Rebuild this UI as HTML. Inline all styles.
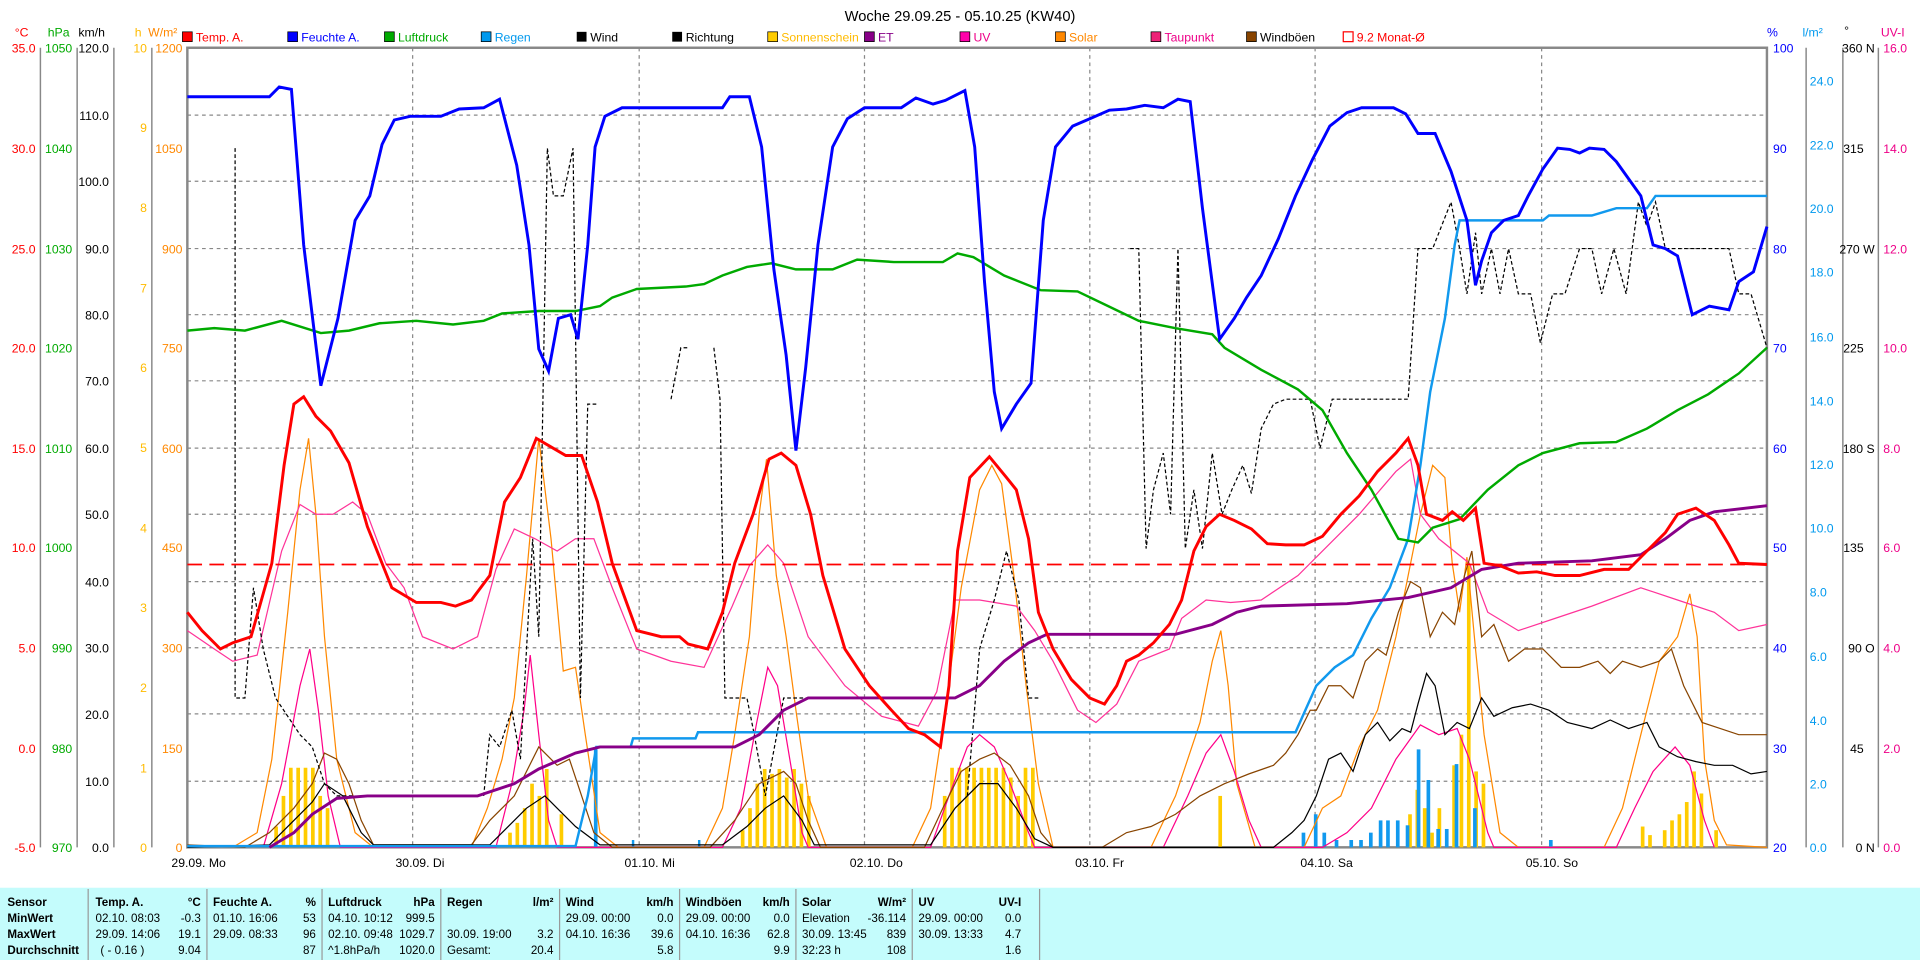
<!DOCTYPE html>
<html><head><meta charset="utf-8"><style>
html,body{margin:0;padding:0;background:#fff;}
svg{display:block;}
text{font-family:"Liberation Sans",sans-serif;}
</style></head><body>
<svg width="1920" height="960" viewBox="0 0 1568 784" xmlns="http://www.w3.org/2000/svg">
<rect width="1568" height="784" fill="#fff"/>
<text x="784" y="17" font-size="12" text-anchor="middle">Woche 29.09.25 - 05.10.25 (KW40)</text>
<!-- units -->
<g font-size="10">
<text x="12" y="30" fill="#f00">°C</text>
<text x="39" y="30" fill="#0a0">hPa</text>
<text x="64" y="30" fill="#000">km/h</text>
<text x="110" y="30" fill="#fb0">h</text>
<text x="121" y="30" fill="#f80">W/m²</text>
<text x="1443" y="30" fill="#00f">%</text>
<text x="1472" y="30" fill="#09e">l/m²</text>
<text x="1506" y="28" fill="#000">°</text>
<text x="1536" y="30" fill="#e08">UV-I</text>
</g>
<!-- legend -->
<g font-size="10">
<rect x="149" y="26" width="8" height="8" fill="#f00" stroke="#000" stroke-width=".6"/><text x="160" y="34" fill="#f00">Temp. A.</text>
<rect x="235" y="26" width="8" height="8" fill="#00f" stroke="#000" stroke-width=".6"/><text x="246" y="34" fill="#00f">Feuchte A.</text>
<rect x="314" y="26" width="8" height="8" fill="#0a0" stroke="#000" stroke-width=".6"/><text x="325" y="34" fill="#0a0">Luftdruck</text>
<rect x="393" y="26" width="8" height="8" fill="#09e" stroke="#000" stroke-width=".6"/><text x="404" y="34" fill="#09e">Regen</text>
<rect x="471" y="26" width="8" height="8" fill="#000"/><text x="482" y="34">Wind</text>
<rect x="549" y="26" width="8" height="8" fill="#000"/><text x="560" y="34">Richtung</text>
<rect x="627" y="26" width="8" height="8" fill="#fc0" stroke="#000" stroke-width=".6"/><text x="638" y="34" fill="#fb0">Sonnenschein</text>
<rect x="706" y="26" width="8" height="8" fill="#808" stroke="#000" stroke-width=".6"/><text x="717" y="34" fill="#808">ET</text>
<rect x="784" y="26" width="8" height="8" fill="#f0a" stroke="#000" stroke-width=".6"/><text x="795" y="34" fill="#e08">UV</text>
<rect x="862" y="26" width="8" height="8" fill="#f80" stroke="#000" stroke-width=".6"/><text x="873" y="34" fill="#f80">Solar</text>
<rect x="940" y="26" width="8" height="8" fill="#e27" stroke="#000" stroke-width=".6"/><text x="951" y="34" fill="#e08">Taupunkt</text>
<rect x="1018" y="26" width="8" height="8" fill="#840" stroke="#000" stroke-width=".6"/><text x="1029" y="34">Windböen</text>
<rect x="1097" y="26" width="8" height="8" fill="#fff" stroke="#f00" stroke-width="1"/><text x="1108" y="34" fill="#f00">9.2 Monat-Ø</text>
</g>
<!-- grid -->
<g stroke="#888" stroke-width="1" stroke-dasharray="3,3">
<line x1="153" x2="1443" y1="94" y2="94"/><line x1="153" x2="1443" y1="148" y2="148"/><line x1="153" x2="1443" y1="203" y2="203"/><line x1="153" x2="1443" y1="257" y2="257"/><line x1="153" x2="1443" y1="311" y2="311"/><line x1="153" x2="1443" y1="366" y2="366"/><line x1="153" x2="1443" y1="420" y2="420"/><line x1="153" x2="1443" y1="475" y2="475"/><line x1="153" x2="1443" y1="529" y2="529"/><line x1="153" x2="1443" y1="583" y2="583"/><line x1="153" x2="1443" y1="638" y2="638"/>
<line x1="337" x2="337" y1="39" y2="692"/><line x1="522" x2="522" y1="39" y2="692"/><line x1="706" x2="706" y1="39" y2="692"/><line x1="890" x2="890" y1="39" y2="692"/><line x1="1074" x2="1074" y1="39" y2="692"/><line x1="1259" x2="1259" y1="39" y2="692"/>
</g>
<!-- axes -->
<g stroke="#888" stroke-width="1.2">
<line x1="33" y1="39" x2="33" y2="692"/><line x1="63" y1="39" x2="63" y2="692"/><line x1="93" y1="39" x2="93" y2="692"/><line x1="124" y1="39" x2="124" y2="692"/>
<line x1="1475" y1="39" x2="1475" y2="692"/><line x1="1505" y1="39" x2="1505" y2="692"/><line x1="1534" y1="39" x2="1534" y2="692"/>
</g>
<rect x="153" y="39" width="1290" height="653" fill="none" stroke="#888" stroke-width="2"/>
<g font-size="10" text-anchor="end">
<g fill="#f00"><text x="29" y="43">35.0</text><text x="29" y="125">30.0</text><text x="29" y="207">25.0</text><text x="29" y="288">20.0</text><text x="29" y="370">15.0</text><text x="29" y="451">10.0</text><text x="29" y="533">5.0</text><text x="29" y="615">0.0</text><text x="29" y="696">-5.0</text></g>
<g fill="#0a0"><text x="59" y="43">1050</text><text x="59" y="125">1040</text><text x="59" y="207">1030</text><text x="59" y="288">1020</text><text x="59" y="370">1010</text><text x="59" y="451">1000</text><text x="59" y="533">990</text><text x="59" y="615">980</text><text x="59" y="696">970</text></g>
<g fill="#000"><text x="89" y="43">120.0</text><text x="89" y="98">110.0</text><text x="89" y="152">100.0</text><text x="89" y="207">90.0</text><text x="89" y="261">80.0</text><text x="89" y="315">70.0</text><text x="89" y="370">60.0</text><text x="89" y="424">50.0</text><text x="89" y="479">40.0</text><text x="89" y="533">30.0</text><text x="89" y="587">20.0</text><text x="89" y="642">10.0</text><text x="89" y="696">0.0</text></g>
<g fill="#fb0"><text x="120" y="43">10</text><text x="120" y="108">9</text><text x="120" y="173">8</text><text x="120" y="239">7</text><text x="120" y="304">6</text><text x="120" y="369">5</text><text x="120" y="435">4</text><text x="120" y="500">3</text><text x="120" y="565">2</text><text x="120" y="631">1</text><text x="120" y="696">0</text></g>
<g fill="#f80"><text x="149" y="43">1200</text><text x="149" y="125">1050</text><text x="149" y="207">900</text><text x="149" y="288">750</text><text x="149" y="370">600</text><text x="149" y="451">450</text><text x="149" y="533">300</text><text x="149" y="615">150</text><text x="149" y="696">0</text></g>
</g>
<g font-size="10">
<g fill="#00f"><text x="1448" y="43">100</text><text x="1448" y="125">90</text><text x="1448" y="207">80</text><text x="1448" y="288">70</text><text x="1448" y="370">60</text><text x="1448" y="451">50</text><text x="1448" y="533">40</text><text x="1448" y="615">30</text><text x="1448" y="696">20</text></g>
<g fill="#09e"><text x="1478" y="70">24.0</text><text x="1478" y="122">22.0</text><text x="1478" y="174">20.0</text><text x="1478" y="226">18.0</text><text x="1478" y="279">16.0</text><text x="1478" y="331">14.0</text><text x="1478" y="383">12.0</text><text x="1478" y="435">10.0</text><text x="1478" y="487">8.0</text><text x="1478" y="540">6.0</text><text x="1478" y="592">4.0</text><text x="1478" y="644">2.0</text><text x="1478" y="696">0.0</text></g>
<g fill="#000" text-anchor="end"><text x="1531" y="43">360 N</text><text x="1522" y="125">315</text><text x="1531" y="207">270 W</text><text x="1522" y="288">225</text><text x="1531" y="370">180 S</text><text x="1522" y="451">135</text><text x="1531" y="533">90 O</text><text x="1522" y="615">45</text><text x="1531" y="696">0 N</text></g>
<g fill="#e08"><text x="1538" y="43">16.0</text><text x="1538" y="125">14.0</text><text x="1538" y="207">12.0</text><text x="1538" y="288">10.0</text><text x="1538" y="370">8.0</text><text x="1538" y="451">6.0</text><text x="1538" y="533">4.0</text><text x="1538" y="615">2.0</text><text x="1538" y="696">0.0</text></g>
</g>
<!-- day labels -->
<g font-size="10"><text x="140" y="708">29.09.  Mo</text><text x="323" y="708">30.09.  Di</text><text x="510" y="708">01.10.  Mi</text><text x="694" y="708">02.10.  Do</text><text x="878" y="708">03.10.  Fr</text><text x="1062" y="708">04.10.  Sa</text><text x="1246" y="708">05.10.  So</text></g>
<!-- sunshine bars -->
<g fill="#fc0">
<rect x="230" y="650" width="3" height="42"/><rect x="236" y="627" width="3" height="65"/><rect x="242" y="627" width="3" height="65"/><rect x="248" y="627" width="3" height="65"/><rect x="254" y="627" width="3" height="65"/><rect x="260" y="650" width="3" height="42"/><rect x="266" y="660" width="3" height="32"/><rect x="224" y="675" width="3" height="17"/>
<rect x="415" y="680" width="3" height="12"/><rect x="421" y="672" width="3" height="20"/><rect x="427" y="660" width="3" height="32"/><rect x="433" y="640" width="3" height="52"/><rect x="439" y="650" width="3" height="42"/><rect x="445" y="628" width="3" height="64"/><rect x="457" y="665" width="3" height="27"/>
<rect x="605" y="678" width="3" height="14"/><rect x="611" y="660" width="3" height="32"/><rect x="617" y="640" width="3" height="52"/><rect x="623" y="628" width="3" height="64"/><rect x="629" y="632" width="3" height="60"/><rect x="635" y="628" width="3" height="64"/><rect x="641" y="635" width="3" height="57"/><rect x="647" y="628" width="3" height="64"/><rect x="653" y="640" width="3" height="52"/><rect x="659" y="650" width="3" height="42"/>
<rect x="770" y="650" width="3" height="42"/><rect x="776" y="627" width="3" height="65"/><rect x="782" y="627" width="3" height="65"/><rect x="788" y="627" width="3" height="65"/><rect x="794" y="627" width="3" height="65"/><rect x="800" y="627" width="3" height="65"/><rect x="806" y="627" width="3" height="65"/><rect x="812" y="627" width="3" height="65"/><rect x="818" y="627" width="3" height="65"/><rect x="824" y="635" width="3" height="57"/><rect x="830" y="650" width="3" height="42"/><rect x="836" y="627" width="3" height="65"/><rect x="842" y="627" width="3" height="65"/>
<rect x="995" y="650" width="3" height="42"/>
<rect x="1150" y="665" width="3" height="27"/><rect x="1156" y="645" width="3" height="47"/><rect x="1162" y="660" width="3" height="32"/><rect x="1168" y="680" width="3" height="12"/><rect x="1174" y="660" width="3" height="32"/><rect x="1186" y="625" width="3" height="67"/><rect x="1192" y="600" width="3" height="92"/><rect x="1198" y="462" width="3" height="230"/><rect x="1204" y="630" width="3" height="62"/><rect x="1210" y="640" width="3" height="52"/>
<rect x="1340" y="675" width="3" height="17"/><rect x="1346" y="682" width="3" height="10"/><rect x="1358" y="678" width="3" height="14"/><rect x="1364" y="670" width="3" height="22"/><rect x="1370" y="665" width="3" height="27"/><rect x="1376" y="655" width="3" height="37"/><rect x="1382" y="630" width="3" height="62"/><rect x="1388" y="648" width="3" height="44"/><rect x="1400" y="678" width="3" height="14"/>
</g>
<!-- rain bars -->
<g fill="#19e">
<rect x="485" y="612" width="3" height="80"/><rect x="516" y="686" width="2" height="6"/><rect x="570" y="686" width="2" height="6"/>
<rect x="1063" y="680" width="3" height="12"/><rect x="1073" y="665" width="3" height="27"/><rect x="1080" y="680" width="3" height="12"/><rect x="1090" y="686" width="3" height="6"/><rect x="1102" y="686" width="3" height="6"/><rect x="1110" y="686" width="3" height="6"/><rect x="1118" y="680" width="3" height="12"/><rect x="1126" y="670" width="3" height="22"/><rect x="1132" y="670" width="3" height="22"/><rect x="1140" y="670" width="3" height="22"/><rect x="1148" y="674" width="3" height="18"/><rect x="1157" y="612" width="3" height="80"/><rect x="1165" y="637" width="3" height="55"/><rect x="1173" y="677" width="3" height="15"/><rect x="1180" y="677" width="3" height="15"/><rect x="1188" y="624" width="3" height="68"/><rect x="1203" y="660" width="3" height="32"/><rect x="1265" y="686" width="3" height="6"/>
</g>
<!-- solar -->
<polyline fill="none" stroke="#f80" stroke-width="1" points="190,692 210,680 222,620 235,500 245,400 252,358 258,420 265,520 275,620 290,680 305,692 385,692 398,660 410,620 420,570 430,470 440,358 450,440 460,548 470,545 478,600 490,680 505,692 575,692 590,660 600,600 612,520 620,420 626,375 634,470 642,520 650,580 660,650 675,692 745,692 760,660 772,580 785,480 800,400 810,380 818,395 828,470 838,560 848,640 860,692 940,692 960,650 980,590 990,540 997,515 1003,560 1010,640 1025,692 1065,692 1080,660 1095,650 1110,610 1125,580 1140,520 1150,470 1160,420 1170,380 1180,390 1186,460 1192,500 1198,455 1205,530 1212,600 1225,680 1240,692 1310,692 1325,660 1340,600 1355,540 1370,520 1380,485 1386,520 1392,620 1400,670 1410,690 1443,692"/>
<!-- UV -->
<polyline fill="none" stroke="#f08" stroke-width="1" points="215,692 230,640 245,560 253,530 260,580 268,650 278,692 405,692 418,640 428,580 433,535 440,600 448,670 455,692 590,692 605,660 618,590 627,545 635,560 645,620 655,680 660,692 760,692 775,650 790,610 800,600 812,610 825,640 840,680 845,692 950,692 970,650 985,615 997,600 1008,630 1020,670 1030,692 1080,692 1100,680 1120,660 1140,620 1160,592 1175,600 1190,595 1200,620 1215,680 1220,692 1320,692 1335,660 1350,630 1368,610 1380,625 1392,670 1400,692"/>
<!-- taupunkt -->
<polyline fill="none" stroke="#f39" stroke-width="1" points="153,515 175,530 190,540 210,535 230,450 245,412 258,420 272,420 288,410 300,420 315,460 330,480 345,520 370,530 390,520 405,465 420,432 437,440 455,450 470,440 485,440 500,480 520,530 548,540 575,545 598,495 612,462 627,445 640,460 660,520 690,560 720,585 750,593 765,565 780,490 800,490 830,495 845,515 860,540 880,580 895,590 912,575 930,540 955,530 965,505 985,490 1005,492 1030,490 1060,470 1090,440 1110,420 1140,385 1152,375 1160,420 1175,440 1200,460 1215,500 1240,515 1270,505 1300,495 1340,480 1370,490 1400,500 1420,515 1443,510"/>
<!-- gusts -->
<polyline fill="none" stroke="#840" stroke-width="1" points="153,690 200,692 220,680 240,660 255,640 265,615 275,620 285,640 295,670 305,690 385,690 400,670 420,650 440,610 455,625 465,620 475,650 485,680 500,692 580,692 600,670 620,640 640,630 650,640 660,670 670,692 755,692 770,660 785,630 800,620 812,615 825,625 840,650 850,680 860,692 900,692 920,680 940,675 960,665 980,650 1000,640 1020,632 1040,625 1050,615 1060,600 1070,580 1075,580 1085,560 1095,560 1105,570 1115,540 1125,530 1132,535 1142,500 1152,475 1160,480 1168,520 1178,500 1188,510 1196,470 1202,450 1210,520 1220,510 1232,540 1245,530 1260,530 1275,545 1290,545 1305,540 1315,550 1325,540 1340,545 1355,540 1365,530 1375,560 1390,590 1405,595 1420,600 1443,600"/>
<!-- wind -->
<polyline fill="none" stroke="#000" stroke-width="1" points="153,692 220,690 240,670 255,655 265,640 280,650 295,680 305,690 400,690 415,675 430,660 445,650 455,660 470,675 490,690 590,690 610,675 625,660 640,650 655,670 665,690 760,690 780,660 800,640 815,640 830,660 845,685 860,692 1040,692 1055,680 1065,670 1075,650 1085,620 1095,615 1105,630 1115,600 1125,590 1135,605 1145,595 1152,598 1158,575 1165,550 1172,560 1180,600 1190,590 1200,595 1210,570 1220,585 1235,578 1250,575 1265,580 1280,590 1300,595 1315,588 1330,595 1345,590 1355,610 1370,618 1385,622 1400,625 1415,625 1430,632 1443,630"/>
<!-- direction dotted -->
<polyline fill="none" stroke="#000" stroke-width="1" stroke-dasharray="3,2" points="192,121 192,570 200,570 207,480 215,530 225,570 235,585 245,600 255,610 265,640 275,650 290,650"/>
<polyline fill="none" stroke="#000" stroke-width="1" stroke-dasharray="3,2" points="395,650 400,600 408,610 418,580 425,620 435,440 440,520 447,121 452,160 460,160 468,121 474,570 480,330 488,330"/>
<polyline fill="none" stroke="#000" stroke-width="1" stroke-dasharray="3,2" points="548,326 556,284 563,284"/>
<polyline fill="none" stroke="#000" stroke-width="1" stroke-dasharray="3,2" points="583,284 588,326 592,570 610,570 616,600 625,650 640,570 660,570"/>
<polyline fill="none" stroke="#000" stroke-width="1" stroke-dasharray="3,2" points="790,650 800,530 812,490 822,450 832,490 840,570 848,570"/>
<polyline fill="none" stroke="#000" stroke-width="1" stroke-dasharray="3,2" points="923,203 930,203 936,448 942,400 950,370 956,420 962,203 968,448 975,400 982,448 990,370 998,420 1006,400 1015,380 1022,403 1030,350 1040,330 1050,326 1062,326 1070,326 1078,366 1088,326 1100,326 1150,326 1158,203 1170,203 1185,165 1192,203 1198,240 1205,190 1210,240 1218,203 1225,240 1232,203 1240,240 1250,240 1258,280 1268,240 1278,240 1290,203 1300,203 1308,240 1318,203 1328,240 1338,165 1345,185 1352,165 1360,203 1400,203 1412,203 1420,240 1430,240 1443,284"/>
<!-- monthly mean -->
<line x1="153" x2="1443" y1="461" y2="461" stroke="#f00" stroke-width="1.5" stroke-dasharray="12,6"/>
<!-- rain cumulative -->
<polyline fill="none" stroke="#19e" stroke-width="2" points="153,691 470,691 480,650 487,610 515,610 517,603 568,603 570,598 1058,598 1066,580 1075,560 1090,545 1105,535 1120,505 1135,480 1150,440 1160,380 1168,320 1180,260 1188,200 1192,180 1200,180 1260,180 1265,176 1300,176 1320,170 1345,170 1352,160 1443,160"/>
<!-- ET -->
<polyline fill="none" stroke="#808" stroke-width="2.4" points="220,692 240,680 255,665 275,652 300,650 390,650 420,640 440,628 470,615 490,610 600,610 620,600 640,580 660,570 780,570 800,560 820,540 840,525 855,518 960,518 990,510 1010,500 1030,495 1100,493 1150,488 1185,480 1210,465 1240,460 1300,458 1340,453 1360,440 1380,425 1400,418 1443,413"/>
<!-- pressure -->
<polyline fill="none" stroke="#0a0" stroke-width="2" points="153,270 175,268 200,270 230,262 262,272 285,270 310,264 340,262 370,265 395,262 410,256 440,254 470,254 490,250 500,243 520,236 560,234 575,232 590,225 610,218 630,215 650,220 680,220 700,212 730,214 770,214 782,207 795,210 820,225 850,237 880,238 905,250 930,262 960,268 990,273 1000,284 1030,302 1060,318 1080,335 1100,370 1120,400 1142,440 1158,443 1170,431 1192,424 1215,400 1240,380 1260,370 1290,362 1320,361 1345,350 1370,335 1395,322 1420,305 1443,284"/>
<!-- temp -->
<polyline fill="none" stroke="#f00" stroke-width="2.4" points="153,500 165,515 180,530 190,525 205,520 222,460 232,380 240,330 248,324 258,340 270,352 285,378 300,430 320,480 340,492 360,492 372,495 385,490 400,470 412,410 425,390 438,358 450,365 462,372 475,372 488,410 500,460 520,515 540,520 555,520 562,526 578,530 590,500 600,460 615,420 628,375 638,370 650,380 662,420 672,470 690,530 710,560 728,580 742,595 755,600 768,610 775,560 782,450 792,390 808,373 822,390 830,400 840,440 848,500 860,530 875,555 890,570 902,575 912,560 920,540 930,535 942,525 955,510 965,490 975,450 985,430 996,420 1008,425 1022,432 1035,444 1050,445 1065,445 1080,438 1095,420 1110,405 1125,385 1140,370 1150,358 1158,380 1165,420 1178,425 1186,418 1195,425 1205,415 1212,460 1225,462 1240,468 1255,467 1270,470 1290,470 1310,465 1330,465 1345,450 1360,435 1370,420 1385,415 1400,425 1412,445 1420,460 1443,461"/>
<!-- humidity -->
<polyline fill="none" stroke="#00f" stroke-width="2.4" points="153,79 220,79 228,71 238,73 248,200 262,315 276,260 290,180 302,160 312,118 322,98 335,95 360,95 375,89 395,88 408,81 422,135 432,200 440,285 448,303 456,260 466,257 472,277 480,200 486,120 494,95 508,88 590,88 596,79 612,79 622,120 632,220 642,290 650,368 658,300 668,200 680,120 692,97 706,88 736,88 748,80 762,85 772,82 788,74 796,120 804,230 812,320 818,350 830,330 842,313 852,180 862,120 876,103 890,97 906,90 920,89 935,86 950,88 962,81 972,83 982,170 996,277 1008,260 1018,243 1030,225 1044,195 1058,160 1072,130 1086,103 1100,92 1112,88 1138,88 1148,93 1158,109 1172,109 1185,140 1198,180 1205,233 1210,213 1218,190 1228,180 1240,176 1248,160 1260,138 1272,121 1282,122 1290,125 1298,121 1310,122 1320,132 1340,160 1350,200 1360,203 1370,209 1382,257 1396,250 1412,253 1420,230 1432,222 1443,185"/>
<!-- table -->
<rect x="0" y="725" width="1568" height="59" fill="#c4fcfc"/>
<g stroke="#999" stroke-width="1">
<line x1="72" y1="726" x2="72" y2="784"/><line x1="169" y1="726" x2="169" y2="784"/><line x1="263" y1="726" x2="263" y2="784"/><line x1="360" y1="726" x2="360" y2="784"/><line x1="457" y1="726" x2="457" y2="784"/><line x1="555" y1="726" x2="555" y2="784"/><line x1="650" y1="726" x2="650" y2="784"/><line x1="745" y1="726" x2="745" y2="784"/><line x1="849" y1="726" x2="849" y2="784"/>
</g>
<g font-size="9.5" font-weight="bold">
<text x="6" y="740">Sensor</text><text x="6" y="753">MinWert</text><text x="6" y="766">MaxWert</text><text x="6" y="779">Durchschnitt</text>
<text x="78" y="740">Temp. A.</text><text x="174" y="740">Feuchte A.</text><text x="268" y="740">Luftdruck</text><text x="365" y="740">Regen</text><text x="462" y="740">Wind</text><text x="560" y="740">Windböen</text><text x="655" y="740">Solar</text><text x="750" y="740">UV</text>
<g text-anchor="end"><text x="164" y="740">°C</text><text x="258" y="740">%</text><text x="355" y="740">hPa</text><text x="452" y="740">l/m²</text><text x="550" y="740">km/h</text><text x="645" y="740">km/h</text><text x="740" y="740">W/m²</text><text x="834" y="740">UV-I</text></g>
</g>
<g font-size="9.5">
<text x="78" y="753">02.10.  08:03</text><text x="78" y="766">29.09.  14:06</text><text x="82" y="779">( - 0.16 )</text>
<text x="174" y="753">01.10.  16:06</text><text x="174" y="766">29.09.  08:33</text>
<text x="268" y="753">04.10.  10:12</text><text x="268" y="766">02.10.  09:48</text><text x="268" y="779">^1.8hPa/h</text>
<text x="365" y="766">30.09.  19:00</text><text x="365" y="779">Gesamt:</text>
<text x="462" y="753">29.09.  00:00</text><text x="462" y="766">04.10.  16:36</text>
<text x="560" y="753">29.09.  00:00</text><text x="560" y="766">04.10.  16:36</text>
<text x="655" y="753">Elevation</text><text x="655" y="766">30.09.  13:45</text><text x="655" y="779">32:23 h</text>
<text x="750" y="753">29.09.  00:00</text><text x="750" y="766">30.09.  13:33</text>
<g text-anchor="end">
<text x="164" y="753">-0.3</text><text x="164" y="766">19.1</text><text x="164" y="779">9.04</text>
<text x="258" y="753">53</text><text x="258" y="766">96</text><text x="258" y="779">87</text>
<text x="355" y="753">999.5</text><text x="355" y="766">1029.7</text><text x="355" y="779">1020.0</text>
<text x="452" y="766">3.2</text><text x="452" y="779">20.4</text>
<text x="550" y="753">0.0</text><text x="550" y="766">39.6</text><text x="550" y="779">5.8</text>
<text x="645" y="753">0.0</text><text x="645" y="766">62.8</text><text x="645" y="779">9.9</text>
<text x="740" y="753">-36.114</text><text x="740" y="766">839</text><text x="740" y="779">108</text>
<text x="834" y="753">0.0</text><text x="834" y="766">4.7</text><text x="834" y="779">1.6</text>
</g>
</g>
</svg>
</body></html>
